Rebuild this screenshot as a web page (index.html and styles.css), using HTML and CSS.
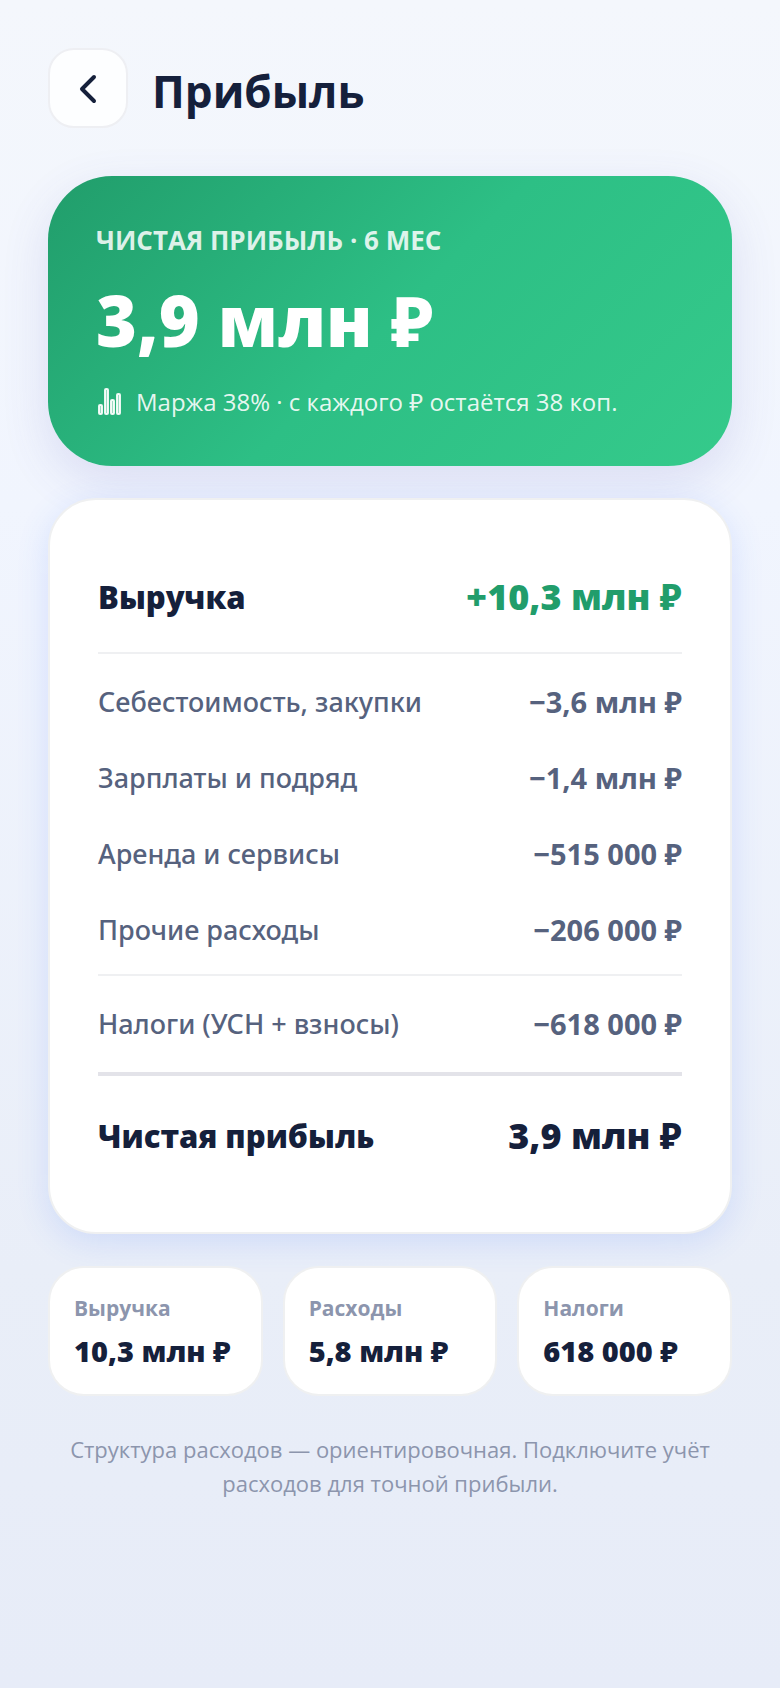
FILE: index.html
```
<!DOCTYPE html>
<html lang="ru">
<head>
    <meta charset="UTF-8">
    <meta name="viewport" content="width=device-width, initial-scale=1.0">
    <title>Прибыль</title>
    <link rel="stylesheet" href="styles.css">
</head>
<body>
    <header class="topbar">
        <button class="back" type="button" aria-label="Назад">
            <svg width="40" height="40" viewBox="0 0 40 40" fill="none" stroke="currentColor" stroke-width="4" stroke-linecap="round" stroke-linejoin="round"><path d="M26 9 14 21l12 12"/></svg>
        </button>
        <h1>Прибыль</h1>
    </header>

    <main>
        <section class="hero">
            <div class="hero-label">Чистая прибыль · 6 мес</div>
            <div class="hero-value">3,9 млн ₽</div>
            <div class="hero-note">
                <svg width="28" height="28" viewBox="0 0 28 28" fill="currentColor" fill-opacity="0.6" stroke="currentColor" stroke-width="2"><rect x="3" y="17" width="3" height="9" rx="1"/><rect x="9" y="1" width="3" height="25" rx="1"/><rect x="15" y="12" width="3" height="14" rx="1"/><rect x="21" y="6" width="3" height="20" rx="1"/></svg>
                <span>Маржа 38% · с каждого ₽ остаётся 38 коп.</span>
            </div>
        </section>

        <section class="card">
            <table>
                <tbody>
                    <tr class="revenue">
                        <th scope="row">Выручка</th>
                        <td>+10,3 млн ₽</td>
                    </tr>
                </tbody>
                <tbody class="expenses">
                    <tr>
                        <th scope="row">Себестоимость, закупки</th>
                        <td>−3,6 млн ₽</td>
                    </tr>
                    <tr>
                        <th scope="row">Зарплаты и подряд</th>
                        <td>−1,4 млн ₽</td>
                    </tr>
                    <tr>
                        <th scope="row">Аренда и сервисы</th>
                        <td>−515 000 ₽</td>
                    </tr>
                    <tr>
                        <th scope="row">Прочие расходы</th>
                        <td>−206 000 ₽</td>
                    </tr>
                </tbody>
                <tbody>
                    <tr class="taxes">
                        <th scope="row">Налоги (УСН + взносы)</th>
                        <td>−618 000 ₽</td>
                    </tr>
                    <tr class="net">
                        <th scope="row">Чистая прибыль</th>
                        <td>3,9 млн ₽</td>
                    </tr>
                </tbody>
            </table>
        </section>

        <section class="stats">
            <div class="stat">
                <div class="stat-label">Выручка</div>
                <div class="stat-value">10,3 млн ₽</div>
            </div>
            <div class="stat">
                <div class="stat-label">Расходы</div>
                <div class="stat-value">5,8 млн ₽</div>
            </div>
            <div class="stat">
                <div class="stat-label">Налоги</div>
                <div class="stat-value">618 000 ₽</div>
            </div>
        </section>

        <p class="hint">Структура расходов — ориентировочная. Подключите учёт расходов для точной прибыли.</p>
    </main>
</body>
</html>
```
FILE: styles.css
```
* {
    box-sizing: border-box;
}
body {
    margin: 0;
    min-height: 100vh;
    padding: 48px;
    font-family: "Open Sans", "Noto Sans", sans-serif;
    color: #15203b;
    background: linear-gradient(180deg, #f4f7fc 0%, #f1f5fe 30%, #e9eef8 75%, #e7ecf8 100%);
}
.topbar {
    display: flex;
    align-items: center;
    gap: 24px;
    margin-bottom: 48px;
}
.back {
    display: flex;
    align-items: center;
    justify-content: center;
    width: 80px;
    height: 80px;
    padding: 0;
    border: 2px solid #eeeff3;
    border-radius: 26px;
    background: #fdfeff;
    color: #15203b;
    cursor: pointer;
}
h1 {
    margin: 0;
    padding-top: 6px;
    font-size: 44px;
    line-height: 64px;
    font-weight: 700;
}
.hero {
    padding: 48px;
    border-radius: 64px;
    color: #fff;
    background: linear-gradient(135deg, #219d6b 0%, #2dbf85 50%, #35ca8b 100%);
    box-shadow: 0 16px 48px rgba(80, 80, 180, 0.14);
}
.hero-label {
    font-size: 26px;
    line-height: 32px;
    font-weight: 700;
    text-transform: uppercase;
    color: rgba(255, 255, 255, 0.85);
}
.hero-value {
    margin: 16px 0 18px;
    font-size: 70px;
    line-height: 96px;
    font-weight: 800;
}
.hero-note {
    display: flex;
    align-items: center;
    gap: 12px;
    font-size: 24px;
    line-height: 32px;
    color: rgba(255, 255, 255, 0.9);
}
.card {
    margin-top: 32px;
    padding: 48px;
    border: 2px solid #eff0f1;
    border-radius: 48px;
    background: #fff;
    box-shadow: 0 8px 32px rgba(70, 120, 255, 0.16);
}
table {
    width: 100%;
    border-spacing: 0;
    color: #56627e;
}
th, td {
    padding: 18px 0;
    line-height: 40px;
}
th {
    font-family: "Noto Sans", "Open Sans", sans-serif;
    font-size: 27px;
    text-align: left;
    font-weight: 500;
}
td {
    font-size: 29px;
    text-align: right;
    font-weight: 700;
    white-space: nowrap;
}
.revenue th, .revenue td {
    padding: 29px 0 35px;
    border-bottom: 2px solid #eff0f2;
}
.expenses tr:first-child > * {
    padding-top: 28px;
}
.expenses tr:last-child > * {
    padding-bottom: 24px;
    border-bottom: 2px solid #eff0f2;
}
.taxes th, .taxes td {
    padding: 28px 0;
    border-bottom: 4px solid #e3e3e9;
}
.net th, .net td {
    padding: 40px 0 28px;
}
.revenue th, .net th {
    font-family: "Open Sans", "Noto Sans", sans-serif;
    font-size: 31px;
    font-weight: 800;
    color: #15203b;
}
.revenue td, .net td {
    font-size: 36px;
    font-weight: 800;
}
.revenue td {
    color: #219d6b;
}
.net td {
    color: #15203b;
}
.stats {
    display: grid;
    grid-template-columns: repeat(3, 1fr);
    gap: 20px;
    margin-top: 32px;
}
.stat {
    padding: 24px;
    border: 2px solid #eff0f1;
    border-radius: 36px;
    background: #fff;
}
.stat-label {
    font-size: 21px;
    line-height: 32px;
    font-weight: 700;
    color: #8c95ad;
}
.stat-value {
    margin-top: 8px;
    font-size: 29px;
    line-height: 38px;
    font-weight: 800;
    white-space: nowrap;
}
.hint {
    margin: 36px 0 0;
    font-size: 22px;
    line-height: 34px;
    text-align: center;
    color: #8c95ad;
}
```
